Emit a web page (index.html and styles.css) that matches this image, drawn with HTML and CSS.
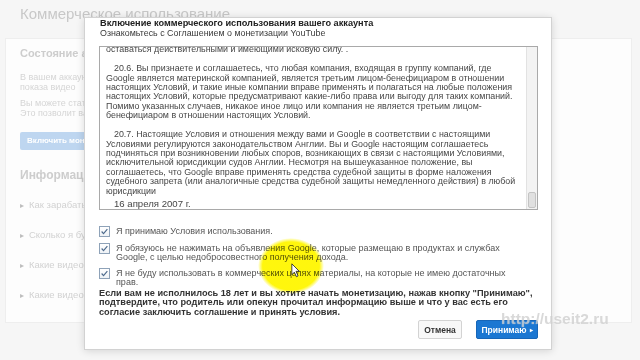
FILE: index.html
```html
<!DOCTYPE html>
<html lang="ru">
<head>
  <meta charset="UTF-8">
  <title>Коммерческое использование</title>
  <link rel="stylesheet" href="styles.css">
</head>
<body>

  <!-- Page behind the dialog -->
  <div class="page">
    <h1 class="page-title">Коммерческое использование</h1>
    <div class="card">
      <h2 class="card-heading">Состояние аккаунта</h2>
      <p class="card-text first">В вашем аккаунте отключена реклама во время<br>показа видео</p>
      <p class="card-text">Вы можете стать партнером YouTube.<br>Это позволит вам зарабатывать на видео</p>
      <div class="enable-button">Включить монетизацию</div>
      <h2 class="card-heading info">Информация</h2>
      <ul class="faq">
        <li>Как зарабатывать на видео?</li>
        <li>Сколько я буду получать?</li>
        <li>Какие видео можно монетизировать?</li>
        <li>Какие видео нельзя монетизировать?</li>
      </ul>
    </div>
  </div>

  <!-- Dialog -->
  <div class="dialog">
    <div class="dialog-title">Включение коммерческого использования вашего аккаунта</div>
    <div class="dialog-sub">Ознакомьтесь с Соглашением о монетизации YouTube</div>

    <div class="terms">
      <div class="terms-text">
        <p>оставаться действительными и имеющими исковую силу. .</p>
        <p class="clause">20.6. Вы признаете и соглашаетесь, что любая компания, входящая в группу компаний, где<br>Google является материнской компанией, является третьим лицом-бенефициаром в отношении<br>настоящих Условий, и такие иные компании вправе применять и полагаться на любые положения<br>настоящих Условий, которые предусматривают какие-либо права или выгоду для таких компаний.<br>Помимо указанных случаев, никакое иное лицо или компания не является третьим лицом-<br>бенефициаром в отношении настоящих Условий.</p>
        <p class="clause">20.7. Настоящие Условия и отношения между вами и Google в соответствии с настоящими<br>Условиями регулируются законодательством Англии. Вы и Google настоящим соглашаетесь<br>подчиняться при возникновении любых споров, возникающих в связи с настоящими Условиями,<br>исключительной юрисдикции судов Англии. Несмотря на вышеуказанное положение, вы<br>соглашаетесь, что Google вправе применять средства судебной защиты в форме наложения<br>судебного запрета (или аналогичные средства судебной защиты немедленного действия) в любой<br>юрисдикции</p>
        <p class="clause date">16 апреля 2007 г.</p>
      </div>
      <div class="scrollbar">
        <div class="thumb"></div>
      </div>
    </div>

    <div class="checks">
      <div class="check-row first">
        <span class="checkbox"><svg viewBox="0 0 11 11" width="9" height="9"><path d="M2 5.5 L4.3 8 L9 2.5" fill="none" stroke="#4d6a8c" stroke-width="1.4"/></svg></span>
        <span class="check-label">Я принимаю Условия использования.</span>
      </div>
      <div class="check-row">
        <span class="checkbox"><svg viewBox="0 0 11 11" width="9" height="9"><path d="M2 5.5 L4.3 8 L9 2.5" fill="none" stroke="#4d6a8c" stroke-width="1.4"/></svg></span>
        <span class="check-label">Я обязуюсь не нажимать на объявления Google, которые размещаю в продуктах и службах<br>Google, с целью недобросовестного получения дохода.</span>
      </div>
      <div class="check-row">
        <span class="checkbox"><svg viewBox="0 0 11 11" width="9" height="9"><path d="M2 5.5 L4.3 8 L9 2.5" fill="none" stroke="#4d6a8c" stroke-width="1.4"/></svg></span>
        <span class="check-label">Я не буду использовать в коммерческих целях материалы, на которые не имею достаточных<br>прав.</span>
      </div>
    </div>

    <p class="age-note">Если вам не исполнилось 18 лет и вы хотите начать монетизацию, нажав кнопку "Принимаю",<br>подтвердите, что родитель или опекун прочитал информацию выше и что у вас есть его<br>согласие заключить соглашение и принять условия.</p>

    <div class="dialog-buttons">
      <div class="btn btn-cancel">Отмена</div>
      <div class="btn btn-accept">Принимаю <span class="arrow">▸</span></div>
    </div>
  </div>

  <!-- Cursor highlight from the screen recording -->
  <div class="highlight"></div>
  <svg class="cursor" viewBox="0 0 12 18" width="10" height="15">
    <path d="M1 1 L1 14 L4 11 L6.5 16.5 L8.5 15.5 L6 10 L10 10 Z" fill="#fff" stroke="#222" stroke-width="1"/>
  </svg>

  <div class="watermark">http://useit2.ru</div>

</body>
</html>
```

FILE: styles.css
```css
/* Basic Reset */
* {
  margin: 0;
  padding: 0;
  box-sizing: border-box;
}

body {
  width: 640px;
  height: 360px;
  overflow: hidden;
  position: relative;
  background-color: #f6f6f6;
  font-family: "Liberation Sans", Arial, sans-serif;
}

/* Page behind the dialog */
.page {
  padding: 5px 8px 0 5px;
}

.page-title {
  font-size: 15px;
  font-weight: normal;
  line-height: 18px;
  color: #c8c8c8;
  padding-left: 15px;
}

.card {
  margin-top: 15px;
  height: 285px;
  background: #fdfdfd;
  border: 1px solid #eeeeee;
  padding: 9px 14px;
}

.card-heading {
  font-size: 11px;
  line-height: 10px;
  color: #cdcdcd;
}

.card-heading.info {
  margin-top: 19px;
  font-size: 12px;
  line-height: 12px;
}

.card-text {
  font-size: 9px;
  line-height: 10px;
  color: #d5d5d5;
  margin-top: 6px;
}

.card-text.first {
  margin-top: 14px;
}

.enable-button {
  margin-top: 14px;
  width: 190px;
  height: 18px;
  background: #bed6f0;
  border-radius: 2px;
  color: #fff;
  font-size: 8px;
  font-weight: bold;
  line-height: 18px;
  padding-left: 7px;
}

.faq {
  list-style: none;
  margin-top: 7px;
}

.faq li {
  font-size: 9.5px;
  line-height: 10px;
  color: #d2d2d2;
  margin-top: 19px;
}

.faq li:before {
  content: '▸';
  font-size: 8px;
  margin-right: 5px;
  color: #bdbdbd;
}

/* Dialog */
.dialog {
  position: absolute;
  left: 84px;
  top: 17px;
  width: 468px;
  height: 333px;
  background: #fff;
  border: 1px solid #d2d2d2;
  box-shadow: 0 1px 8px rgba(0, 0, 0, 0.14);
  padding: 1px 13px 0 14px;
}

.dialog-title {
  font-size: 9.2px;
  font-weight: bold;
  line-height: 9.5px;
  color: #222;
  padding-left: 1px;
}

.dialog-sub {
  font-size: 8.9px;
  line-height: 9px;
  color: #3a3a3a;
  padding-left: 1px;
}

/* Terms box */
.terms {
  margin-top: 8.5px;
  height: 164px;
  border: 1px solid #a9a9a9;
  display: flex;
}

.terms-text {
  flex: 1;
  overflow: hidden;
  display: flex;
  flex-direction: column;
  justify-content: flex-end;
  padding: 0 0 0 6px;
  font-size: 8.9px;
  line-height: 9.4px;
  color: #464646;
  white-space: nowrap;
}

.terms-text p {
  margin-top: 9.6px;
}

.terms-text .clause {
  text-indent: 8px;
}

.terms-text .date {
  margin-top: 3px;
  font-size: 9.6px;
  line-height: 10px;
}

.scrollbar {
  width: 11px;
  background: #f3f3f3;
  border-left: 1px solid #e2e2e2;
  display: flex;
  flex-direction: column;
  justify-content: flex-end;
  padding: 1px;
}

.thumb {
  height: 16px;
  background: #e0e0e0;
  border: 1px solid #c4c4c4;
  border-radius: 2px;
}

/* Checkboxes */
.checks {
  margin-top: 16px;
}

.check-row {
  display: flex;
  gap: 6px;
  margin-top: 6px;
}

.check-row.first {
  margin-top: 0;
}

.checkbox {
  flex: none;
  width: 11px;
  height: 11px;
  border: 1px solid #8ea2b8;
  background: linear-gradient(#fff, #eef2f6);
  display: flex;
  justify-content: center;
  align-items: center;
}

.check-label {
  font-size: 9px;
  line-height: 9px;
  color: #555;
  white-space: nowrap;
  padding-top: 1px;
}

.age-note {
  margin-top: 2px;
  font-size: 9.2px;
  font-weight: bold;
  line-height: 9.4px;
  color: #333;
  white-space: nowrap;
}

/* Buttons */
.dialog-buttons {
  margin-top: 3px;
  display: flex;
  justify-content: flex-end;
  gap: 14px;
}

.btn {
  height: 19px;
  border-radius: 2px;
  font-size: 8.5px;
  font-weight: bold;
  display: flex;
  justify-content: center;
  align-items: center;
}

.btn-cancel {
  width: 44px;
  background: #f8f8f8;
  border: 1px solid #d3d3d3;
  color: #333;
}

.btn-accept {
  width: 62px;
  background: #1b77d2;
  border: 1px solid #1766b8;
  color: #fff;
}

.btn-accept .arrow {
  font-size: 6px;
  margin-left: 3px;
}

/* Recording overlays */
.highlight {
  position: absolute;
  left: 258px;
  top: 238px;
  width: 66px;
  height: 56px;
  border-radius: 50%;
  background: radial-gradient(closest-side, rgba(255, 246, 0, 0.95) 86%, rgba(255, 246, 0, 0) 100%);
  mix-blend-mode: multiply;
}

.cursor {
  position: absolute;
  left: 291px;
  top: 263px;
}

.watermark {
  position: absolute;
  left: 501px;
  top: 311px;
  font-size: 15.5px;
  font-weight: bold;
  line-height: 1;
  color: rgba(180, 180, 180, 0.5);
  text-shadow: 0 0 1px rgba(255, 255, 255, 0.7);
}
```
